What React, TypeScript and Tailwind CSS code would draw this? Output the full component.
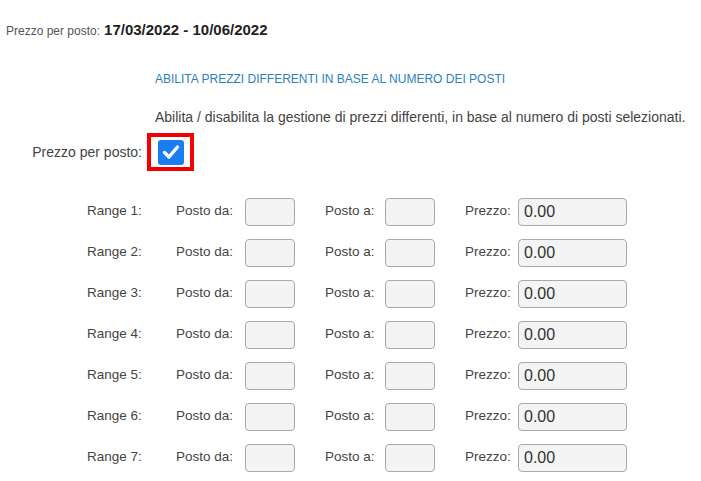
import React from 'react';

const font = { fontFamily: '"Liberation Sans", Arial, sans-serif' };

function Row({ n }: { n: number }) {
  return (
    <div className="flex items-center h-[41px] pl-[87px] text-[13.5px] text-[#444]">
      <span className="w-[89px]">Range {n}:</span>
      <span className="w-[69px]">Posto da:</span>
      <input className="w-[50px] h-[28px] rounded-[4px] border border-[#a9a9a9] bg-[#f4f4f4] outline-none" />
      <span className="w-[60px] ml-[30px]">Posto a:</span>
      <input className="w-[50px] h-[28px] rounded-[4px] border border-[#a9a9a9] bg-[#f4f4f4] outline-none" />
      <span className="w-[53px] ml-[30px]">Prezzo:</span>
      <input
        defaultValue="0.00"
        className="w-[109px] h-[28px] rounded-[4px] border border-[#a9a9a9] bg-[#f4f4f4] px-[5px] text-[16px] text-[#333] outline-none"
      />
    </div>
  );
}

export default function App() {
  return (
    <div className="w-[701px] h-[481px] bg-white overflow-hidden" style={font}>
      {/* header */}
      <div className="pt-[19px] pl-[6px] flex items-baseline gap-[4px] h-[40px]">
        <span className="text-[12px] text-[#555]">Prezzo per posto:</span>
        <span className="text-[15px] font-bold text-[#222]">17/03/2022 - 10/06/2022</span>
      </div>

      <div className="pl-[155px] mt-[30px] text-[12px] text-[#2b7fc0]">ABILITA PREZZI DIFFERENTI IN BASE AL NUMERO DEI POSTI</div>
      <div className="pl-[155px] mt-[19px] text-[14px] text-[#444]">
        Abilita / disabilita la gestione di prezzi differenti, in base al numero di posti selezionati.
      </div>

      {/* checkbox row */}
      <div className="flex items-center mt-[5px] h-[38px]">
        <span className="w-[143px] text-right pr-[1px] text-[14px] text-[#444]">Prezzo per posto:</span>
        <div className="ml-[4px] w-[47px] h-[38px] border-[4px] border-[#f40000] flex items-center justify-center">
          <div className="w-[26px] h-[25px] rounded-[3px] bg-[#1a7ef2] flex items-center justify-center">
            <svg width="18" height="16" viewBox="0 0 18 16">
              <path d="M2.5 8.5 L7 13 L15.5 3" fill="none" stroke="white" strokeWidth="3.4" strokeLinecap="round" strokeLinejoin="round" />
            </svg>
          </div>
        </div>
      </div>

      <div className="mt-[20px]">
        {[1, 2, 3, 4, 5, 6, 7].map((n) => (
          <Row key={n} n={n} />
        ))}
      </div>
    </div>
  );
}
